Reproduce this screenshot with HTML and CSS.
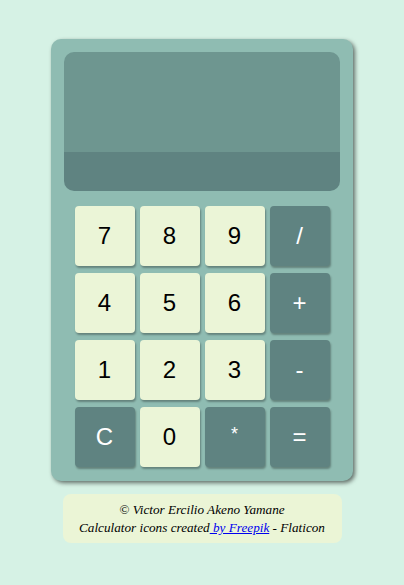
FILE: index.html
```html
<!DOCTYPE html>
<html>
<head>
<meta charset="utf-8">
<link rel="stylesheet" href="styles.css">
</head>
<body>
<main class="page">
  <div class="calc">
    <div class="display">
      <div class="display-top"></div>
      <div class="display-bottom"></div>
    </div>
    <div class="keys">
      <button class="key num">7</button>
      <button class="key num">8</button>
      <button class="key num">9</button>
      <button class="key op">/</button>
      <button class="key num">4</button>
      <button class="key num">5</button>
      <button class="key num">6</button>
      <button class="key op">+</button>
      <button class="key num">1</button>
      <button class="key num">2</button>
      <button class="key num">3</button>
      <button class="key op">-</button>
      <button class="key op">C</button>
      <button class="key num">0</button>
      <button class="key op star">*</button>
      <button class="key op">=</button>
    </div>
  </div>
  <footer class="credits">
    <div>© Victor Ercilio Akeno Yamane</div>
    <div>Calculator icons created<a href="#"> by Freepik</a> - Flaticon</div>
  </footer>
</main>
</body>
</html>
```
FILE: styles.css
```css
html, body {
  margin: 0;
  padding: 0;
  background: #d6f2e5;
}
.page {
  display: flex;
  flex-direction: column;
  align-items: center;
  padding-top: 39px;
}
.calc {
  width: 302px;
  box-sizing: border-box;
  background: #8fbcb2;
  border-radius: 10px;
  padding: 13px 13px 14px;
  box-shadow: 2px 2px 4px rgba(0,0,0,0.55);
  display: flex;
  flex-direction: column;
  align-items: center;
}
.display {
  width: 276px;
  height: 139px;
  border-radius: 10px;
  overflow: hidden;
  display: flex;
  flex-direction: column;
}
.display-top {
  height: 100px;
  background: #6e9690;
}
.display-bottom {
  flex: 1;
  background: #5f8381;
}
.keys {
  margin-top: 15px;
  display: grid;
  grid-template-columns: repeat(4, 60px);
  grid-auto-rows: 60px;
  column-gap: 5px;
  row-gap: 7px;
}
.key {
  border: none;
  border-radius: 4px;
  font-family: "Liberation Sans", Arial, sans-serif;
  font-size: 24px;
  padding: 0;
  box-shadow: 1px 2px 2px rgba(0,0,0,0.3);
}
.num {
  background: #ebf5d7;
  color: #000;
}
.op {
  background: #5f8381;
  color: #fff;
}
.star {
  font-size: 18px;
  padding-bottom: 6px;
}
.credits {
  margin-top: 13px;
  width: 279px;
  box-sizing: border-box;
  background: #ebf5d6;
  border-radius: 8px;
  padding: 7px 0 6px;
  text-align: center;
  font-family: "Liberation Serif", "Times New Roman", serif;
  font-style: italic;
  font-size: 13.2px;
  line-height: 18px;
  color: #000;
}
.credits a {
  color: #0000ee;
}
```
